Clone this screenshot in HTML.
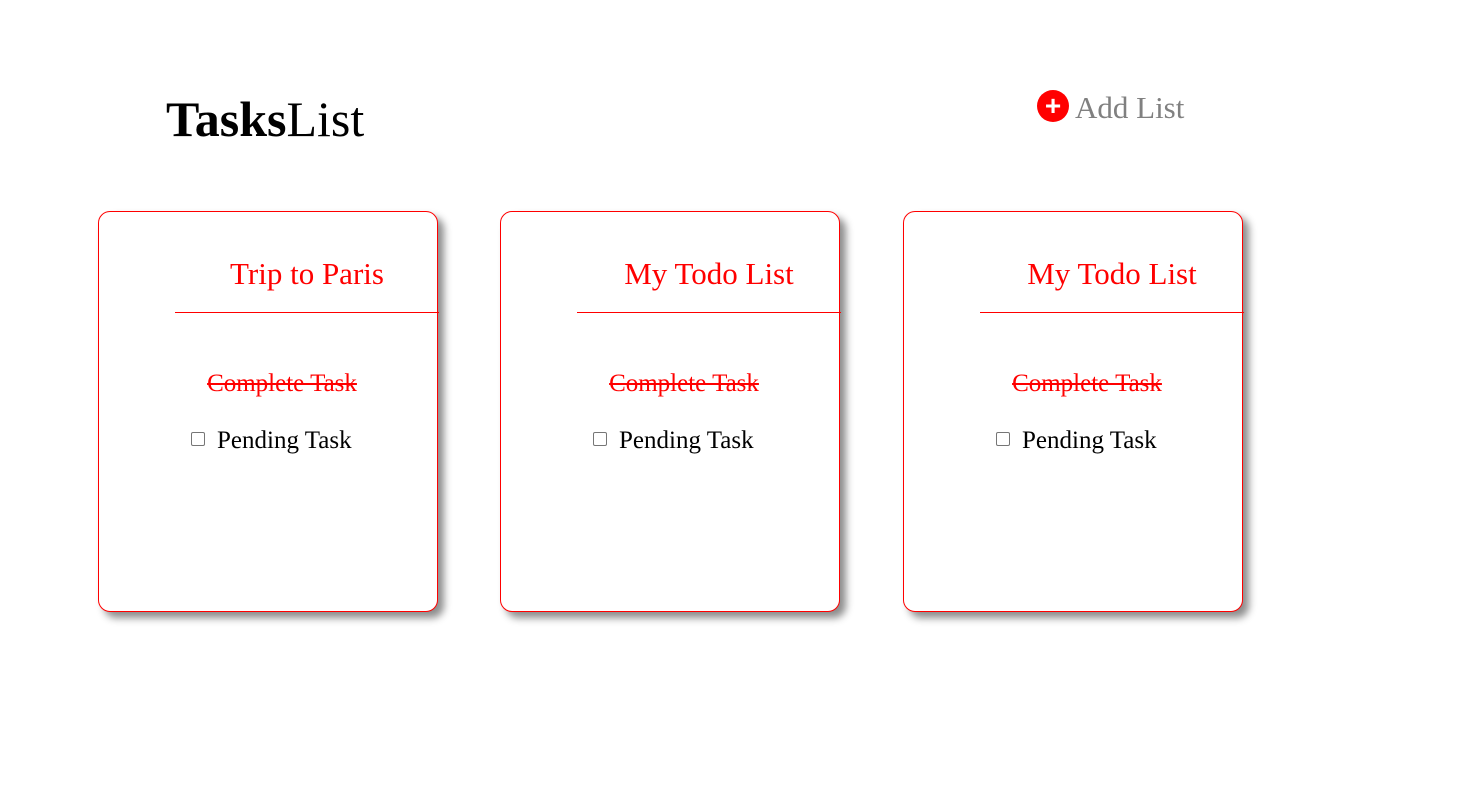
<!DOCTYPE html>
<html><head><style>
body{margin:0;width:1482px;height:801px;background:#fff;font-family:"Liberation Serif",serif;position:relative;overflow:hidden}
.t{position:absolute;left:166px;top:89px;font-size:50px;line-height:60px;margin:0;color:#000;font-weight:normal}
.add{position:absolute;left:1037px;top:90px;font-size:31px;color:#808080;line-height:36px;white-space:nowrap}
.add .c{display:inline-block;width:32px;height:32px;border-radius:50%;background:#f00;color:#fff;font-family:"Liberation Sans",sans-serif;font-weight:bold;font-size:28px;line-height:31px;text-align:center;vertical-align:top;margin-right:6px;margin-top:0}
.card{position:absolute;top:211px;width:338px;height:399px;border:1px solid #f00;border-radius:12px;box-shadow:6px 6px 8px rgba(0,0,0,.45);background:#fff}
.h{position:absolute;left:76px;top:44px;width:264px;height:56px;border-bottom:1px solid #f00;color:#f00;font-size:31px;text-align:center;line-height:36px}
.done{position:absolute;left:0;width:366px;top:157px;text-align:center;color:#f00;font-size:25px;text-decoration:line-through;line-height:30px}
.p{position:absolute;left:92px;top:214px;font-size:25px;line-height:30px;white-space:nowrap}
.p i{display:inline-block;width:12px;height:12px;border:1px solid #767676;border-radius:2px;vertical-align:middle;margin:-6px 12px 0 0}
</style></head><body>
<h1 class="t"><b>Tasks</b>List</h1>
<div class="add"><span class="c">+</span>Add List</div>
<div class="card" style="left:98px"><div class="h">Trip to Paris</div><div class="done">Complete Task</div><div class="p"><i></i>Pending Task</div></div>
<div class="card" style="left:500px"><div class="h">My Todo List</div><div class="done">Complete Task</div><div class="p"><i></i>Pending Task</div></div>
<div class="card" style="left:903px"><div class="h">My Todo List</div><div class="done">Complete Task</div><div class="p"><i></i>Pending Task</div></div>
</body></html>
